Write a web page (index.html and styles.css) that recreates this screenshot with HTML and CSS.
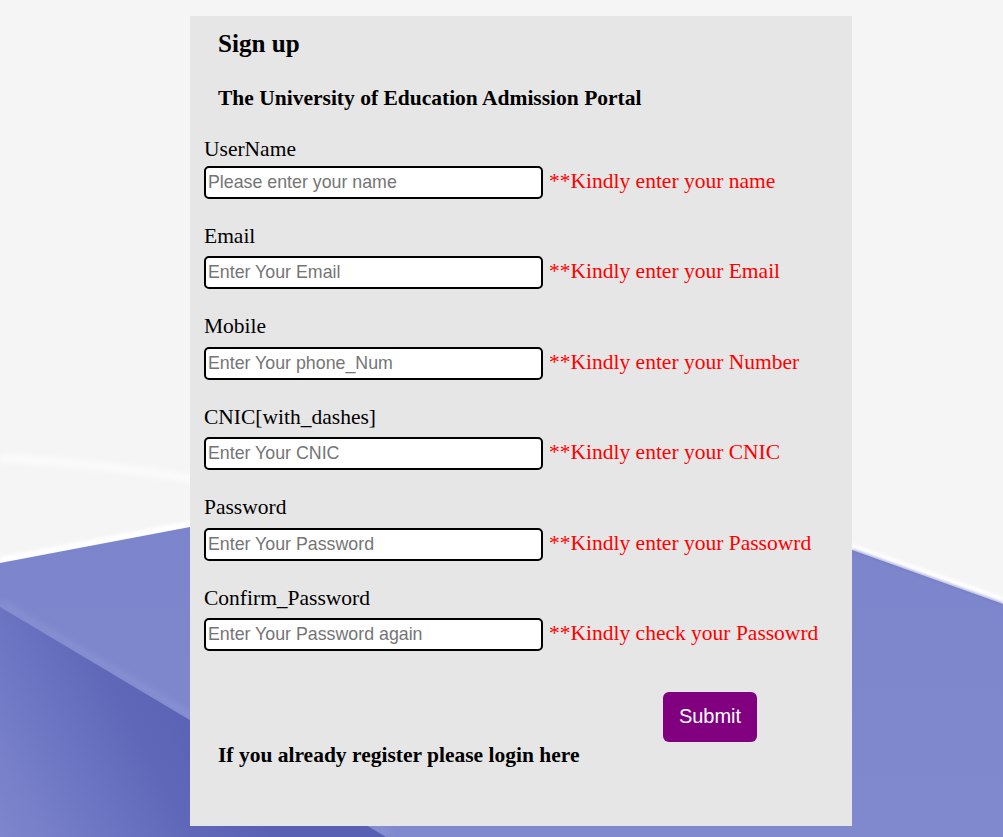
FILE: index.html
```html
<!DOCTYPE html>
<html lang="en">
<head>
<meta charset="utf-8">
<title>Sign up</title>
<link rel="stylesheet" href="styles.css">
</head>
<body>
<div class="backdrop" aria-hidden="true">
  <svg viewBox="0 0 1003 837" preserveAspectRatio="none" width="100%" height="100%">
    <defs>
      <linearGradient id="hill" x1="0" y1="0" x2="0" y2="1">
        <stop offset="0" stop-color="#7c85cb"/>
        <stop offset="1" stop-color="#8089cd"/>
      </linearGradient>
      <linearGradient id="wedge" gradientUnits="userSpaceOnUse" x1="230" y1="740" x2="0" y2="860">
        <stop offset="0" stop-color="#5760b3"/>
        <stop offset="0.3" stop-color="#5f68b8"/>
        <stop offset="0.6" stop-color="#6d76c3"/>
        <stop offset="1" stop-color="#8089cd"/>
      </linearGradient>
      <filter id="soft" x="-10%" y="-50%" width="120%" height="200%">
        <feGaussianBlur stdDeviation="3"/>
      </filter>
      <filter id="soft1" x="-10%" y="-50%" width="120%" height="200%">
        <feGaussianBlur stdDeviation="1.5"/>
      </filter>
    </defs>
    <rect width="1003" height="837" fill="#f5f5f5"/>
    <path d="M0,458 Q100,463 200,480" stroke="#ffffff" stroke-width="6" stroke-opacity="0.8" fill="none" filter="url(#soft)"/>
    <path d="M0,560 L190,524 C400,486 700,498 852,547 L1003,600" stroke="#ffffff" stroke-width="6" fill="none" filter="url(#soft1)"/>
    <path d="M0,563 L190,527 C400,489 700,501 852,550 L1003,604 L1003,837 L0,837 Z" fill="url(#hill)"/>
    <path d="M852,550 L1003,604" stroke="#6f78c2" stroke-width="1.5" fill="none" filter="url(#soft1)"/>
    <path d="M0,603 L390,834" stroke="#8992d3" stroke-width="6" fill="none" filter="url(#soft)"/>
    <path d="M0,607 L386,837 L0,837 Z" fill="url(#wedge)"/>
  </svg>
</div>

<form class="card" onsubmit="return false;">
  <h3 class="title">Sign up</h3>
  <h4 class="subtitle">The University of Education Admission Portal</h4>

  <div class="fields">
    <div class="field field-first">
      <label class="label" for="uname">UserName</label>
      <div class="row">
        <input class="input" id="uname" type="text" placeholder="Please enter your name">
        <span class="error">**Kindly enter your name</span>
      </div>
    </div>
    <div class="field">
      <label class="label" for="email">Email</label>
      <div class="row">
        <input class="input" id="email" type="text" placeholder="Enter Your Email">
        <span class="error">**Kindly enter your Email</span>
      </div>
    </div>
    <div class="field">
      <label class="label" for="mobile">Mobile</label>
      <div class="row">
        <input class="input" id="mobile" type="text" placeholder="Enter Your phone_Num">
        <span class="error">**Kindly enter your Number</span>
      </div>
    </div>
    <div class="field">
      <label class="label" for="cnic">CNIC[with_dashes]</label>
      <div class="row">
        <input class="input" id="cnic" type="text" placeholder="Enter Your CNIC">
        <span class="error">**Kindly enter your CNIC</span>
      </div>
    </div>
    <div class="field">
      <label class="label" for="pass">Password</label>
      <div class="row">
        <input class="input" id="pass" type="password" placeholder="Enter Your Password">
        <span class="error">**Kindly enter your Passowrd</span>
      </div>
    </div>
    <div class="field">
      <label class="label" for="cpass">Confirm_Password</label>
      <div class="row">
        <input class="input" id="cpass" type="password" placeholder="Enter Your Password again">
        <span class="error">**Kindly check your Passowrd</span>
      </div>
    </div>
  </div>

  <div class="actions">
    <button class="submit" type="submit">Submit</button>
  </div>
  <h4 class="login">If you already register please login here</h4>
</form>
</body>
</html>
```
FILE: styles.css
```css
html, body {
  margin: 0;
  padding: 0;
}

body {
  background: #f5f5f5;
  font-family: "Liberation Serif", "Times New Roman", serif;
  font-size: 21.5px;
  color: #000;
  min-height: 837px;
  overflow: hidden;
  padding-top: 16px;
  box-sizing: border-box;
}

.backdrop {
  position: fixed;
  inset: 0;
  z-index: -1;
}

.backdrop svg {
  display: block;
}

.card {
  box-sizing: border-box;
  width: 662px;
  height: 810px;
  margin: 0 0 0 190px;
  padding: 13px 14px 0 14px;
  background: #e6e6e6;
  display: flex;
  flex-direction: column;
  align-items: flex-start;
}

.title {
  margin: 0 0 0 14px;
  font-size: 25.1px;
  line-height: 29px;
  font-weight: bold;
}

.subtitle {
  margin: 27.5px 0 0 14px;
  font-size: 21.5px;
  line-height: 24px;
  font-weight: bold;
}

.fields {
  margin-top: 27.3px;
  display: flex;
  flex-direction: column;
  gap: 25px;
}

.field {
  display: flex;
  flex-direction: column;
  align-items: flex-start;
}

.label {
  font-size: 21.5px;
  line-height: 24px;
  margin-bottom: 8.5px;
}

.field-first .label {
  margin-bottom: 5.2px;
}

.row {
  display: flex;
  align-items: baseline;
  gap: 6px;
}

.input {
  box-sizing: border-box;
  width: 339px;
  height: 33px;
  margin: 0;
  padding: 0 2px;
  border: 2px solid #000;
  border-radius: 5px;
  background: #fff;
  font-family: "Liberation Sans", Arial, sans-serif;
  font-size: 17.8px;
  color: #000;
  outline: none;
}

.input::placeholder {
  color: #757575;
  opacity: 1;
}

.error {
  color: #ff0000;
  font-size: 21.5px;
  line-height: 24px;
  white-space: nowrap;
}

.actions {
  margin-top: 40.5px;
  padding-left: 459px;
  display: flex;
}

.submit {
  box-sizing: border-box;
  width: 94px;
  height: 50px;
  margin: 0;
  padding: 0;
  border: none;
  border-radius: 6px;
  background: #800080;
  color: #fff;
  font-family: "Liberation Sans", Arial, sans-serif;
  font-size: 20px;
  cursor: pointer;
}

.login {
  margin: 0.8px 0 0 14px;
  font-size: 21.5px;
  line-height: 24px;
  font-weight: bold;
}
```
